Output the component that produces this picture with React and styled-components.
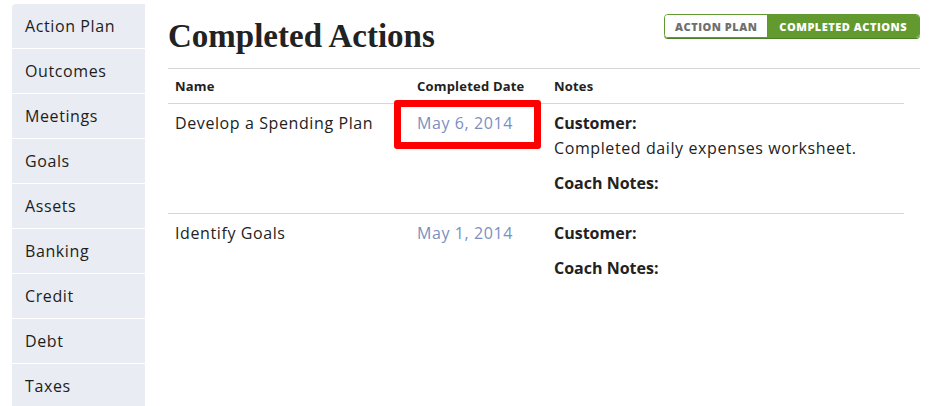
import styled, { createGlobalStyle } from "styled-components";

const GlobalStyle = createGlobalStyle`
  * { box-sizing: border-box; }
  body {
    margin: 0;
    background: #fff;
    font-family: "Open Sans", "Liberation Sans", sans-serif;
    color: #222;
  }
`;

const navItems = [
  "Action Plan",
  "Outcomes",
  "Meetings",
  "Goals",
  "Assets",
  "Banking",
  "Credit",
  "Debt",
  "Taxes",
];

const actions = [
  {
    name: "Develop a Spending Plan",
    date: "May 6, 2014",
    customer: "Completed daily expenses worksheet.",
    coach: "",
    highlight: true,
  },
  {
    name: "Identify Goals",
    date: "May 1, 2014",
    customer: "",
    coach: "",
  },
];

export default function App() {
  return (
    <>
      <GlobalStyle />
      <Page>
        <Sidebar>
          {navItems.map((item) => (
            <NavItem key={item}>{item}</NavItem>
          ))}
        </Sidebar>
        <Main>
          <TopBar>
            <Heading>Completed Actions</Heading>
            <Toggle>
              <ToggleButton>Action Plan</ToggleButton>
              <ToggleButton active>Completed Actions</ToggleButton>
            </Toggle>
          </TopBar>
          <Table>
            <thead>
              <tr>
                <Th style={{ width: 242 }}>Name</Th>
                <Th style={{ width: 137 }}>Completed Date</Th>
                <Th>Notes</Th>
              </tr>
            </thead>
            <tbody>
              {actions.map((a) => (
                <tr key={a.name}>
                  <Td>{a.name}</Td>
                  <DateCell>
                    {a.highlight && <Highlight />}
                    {a.date}
                  </DateCell>
                  <Td>
                    <Note>
                      <Label>Customer:</Label>
                      {a.customer && <NoteText>{a.customer}</NoteText>}
                    </Note>
                    <Note>
                      <Label>Coach Notes:</Label>
                      {a.coach && <NoteText>{a.coach}</NoteText>}
                    </Note>
                  </Td>
                </tr>
              ))}
            </tbody>
          </Table>
        </Main>
      </Page>
    </>
  );
}

const Page = styled.div`
  display: flex;
  align-items: flex-start;
  padding: 4px 0 0 12px;
  height: 406px;
  overflow: hidden;
`;

const Sidebar = styled.nav`
  width: 133px;
  flex-shrink: 0;
  background: #e9ecf2;
  border-top-left-radius: 4px;
  overflow: hidden;
`;

const NavItem = styled.div`
  height: 45px;
  padding-left: 13px;
  display: flex;
  align-items: center;
  font-size: 16px;
  letter-spacing: 0.6px;
  color: #1d1d1d;
  border-bottom: 1px solid #fff;
`;

const Main = styled.div`
  margin-left: 23px;
  width: 752px;
`;

const TopBar = styled.div`
  display: flex;
  justify-content: space-between;
  align-items: flex-start;
  border-bottom: 1px solid #d6d6d6;
  height: 65px;
`;

const Heading = styled.h1`
  margin: 12px 0 0;
  font-family: "Liberation Serif", serif;
  font-weight: 700;
  font-size: 33px;
  line-height: 40px;
  color: #222;
`;

const Toggle = styled.div`
  display: flex;
  margin-top: 10px;
  border: 1px solid #629a30;
  border-radius: 4px;
  overflow: hidden;
  box-shadow: 0 1px 0 #4d7f24;
`;

const ToggleButton = styled.button`
  border: 0;
  height: 22px;
  padding: 0 ${(p) => (p.active ? "12px" : "10px")};
  font-family: "Open Sans", "Liberation Sans", sans-serif;
  font-size: 11px;
  font-weight: 800;
  letter-spacing: 0.5px;
  text-transform: uppercase;
  background: ${(p) => (p.active ? "#629a30" : "#fff")};
  color: ${(p) => (p.active ? "#fff" : "#6f6f6f")};
  cursor: pointer;
`;

const Table = styled.table`
  width: 736px;
  border-collapse: collapse;
`;

const Th = styled.th`
  text-align: left;
  font-size: 13px;
  font-weight: 700;
  letter-spacing: 0.2px;
  line-height: 21px;
  padding: 7px 7px 6px;
  color: #222;
  border-bottom: 1px solid #d6d6d6;
`;

const Td = styled.td`
  vertical-align: top;
  font-size: 16px;
  letter-spacing: 0.6px;
  line-height: 25px;
  padding: 7px 7px 7px;
  color: #222;
  tr:not(:last-child) > & {
    border-bottom: 1px solid #d6d6d6;
  }
`;

const DateCell = styled(Td)`
  position: relative;
  color: #7b8fbf;
`;

const Highlight = styled.span`
  position: absolute;
  left: -16px;
  top: -4px;
  width: 147px;
  height: 49px;
  border: 7px solid #ff0000;
  border-radius: 3px;
  pointer-events: none;
`;

const Note = styled.div`
  margin-bottom: 10px;
`;

const Label = styled.div`
  font-weight: 700;
  letter-spacing: 0;
`;

const NoteText = styled.div``;
